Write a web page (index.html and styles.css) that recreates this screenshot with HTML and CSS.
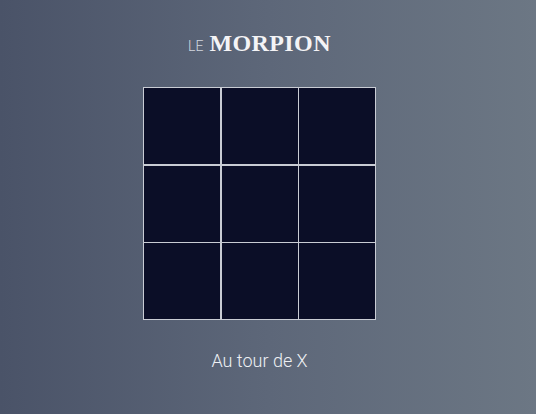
FILE: index.html
```html
<!DOCTYPE html>
<html lang="fr">
<head>
<meta charset="utf-8">
<link rel="stylesheet" href="styles.css">
</head>
<body>
<main class="page">
  <h1 class="title"><span class="title-le">LE</span><span class="title-main">MORPION</span></h1>
  <div class="board">
    <div class="cell"></div><div class="cell"></div><div class="cell"></div>
    <div class="cell"></div><div class="cell"></div><div class="cell"></div>
    <div class="cell"></div><div class="cell"></div><div class="cell"></div>
  </div>
  <p class="status">Au tour de X</p>
</main>
</body>
</html>
```
FILE: styles.css
```css
html, body {
  margin: 0;
  height: 100%;
}
body {
  background: linear-gradient(90deg, #4a5368 0%, #5d6779 50%, #6c7784 100%);
  font-family: Roboto, "Liberation Sans", sans-serif;
  overflow: hidden;
}
.page {
  box-sizing: border-box;
  height: 414px;
  padding: 29px 17px 0 0;
  display: flex;
  flex-direction: column;
  align-items: center;
}
.title {
  margin: 0;
  display: flex;
  align-items: baseline;
  gap: 6px;
  line-height: 28px;
  height: 28px;
  font-size: 14px;
  font-weight: normal;
  white-space: nowrap;
}
.title-le {
  font-family: Roboto, "Liberation Sans", sans-serif;
  font-weight: 300;
  font-size: 14px;
  color: #d3d7df;
}
.title-main {
  font-family: "Liberation Serif", "Times New Roman", serif;
  font-weight: bold;
  font-size: 24px;
  letter-spacing: 0.4px;
  color: #f4f4f6;
}
.board {
  margin-top: 30px;
  display: grid;
  grid-template-columns: repeat(3, 76px);
  grid-template-rows: repeat(3, 76px);
  gap: 1.5px;
  padding: 1px;
  background: #c9ccd4;
}
.cell {
  background: #0b0e27;
}
.status {
  margin: 29px 0 0;
  font-weight: 300;
  font-size: 18px;
  line-height: 24px;
  color: #eef0f4;
}
```
